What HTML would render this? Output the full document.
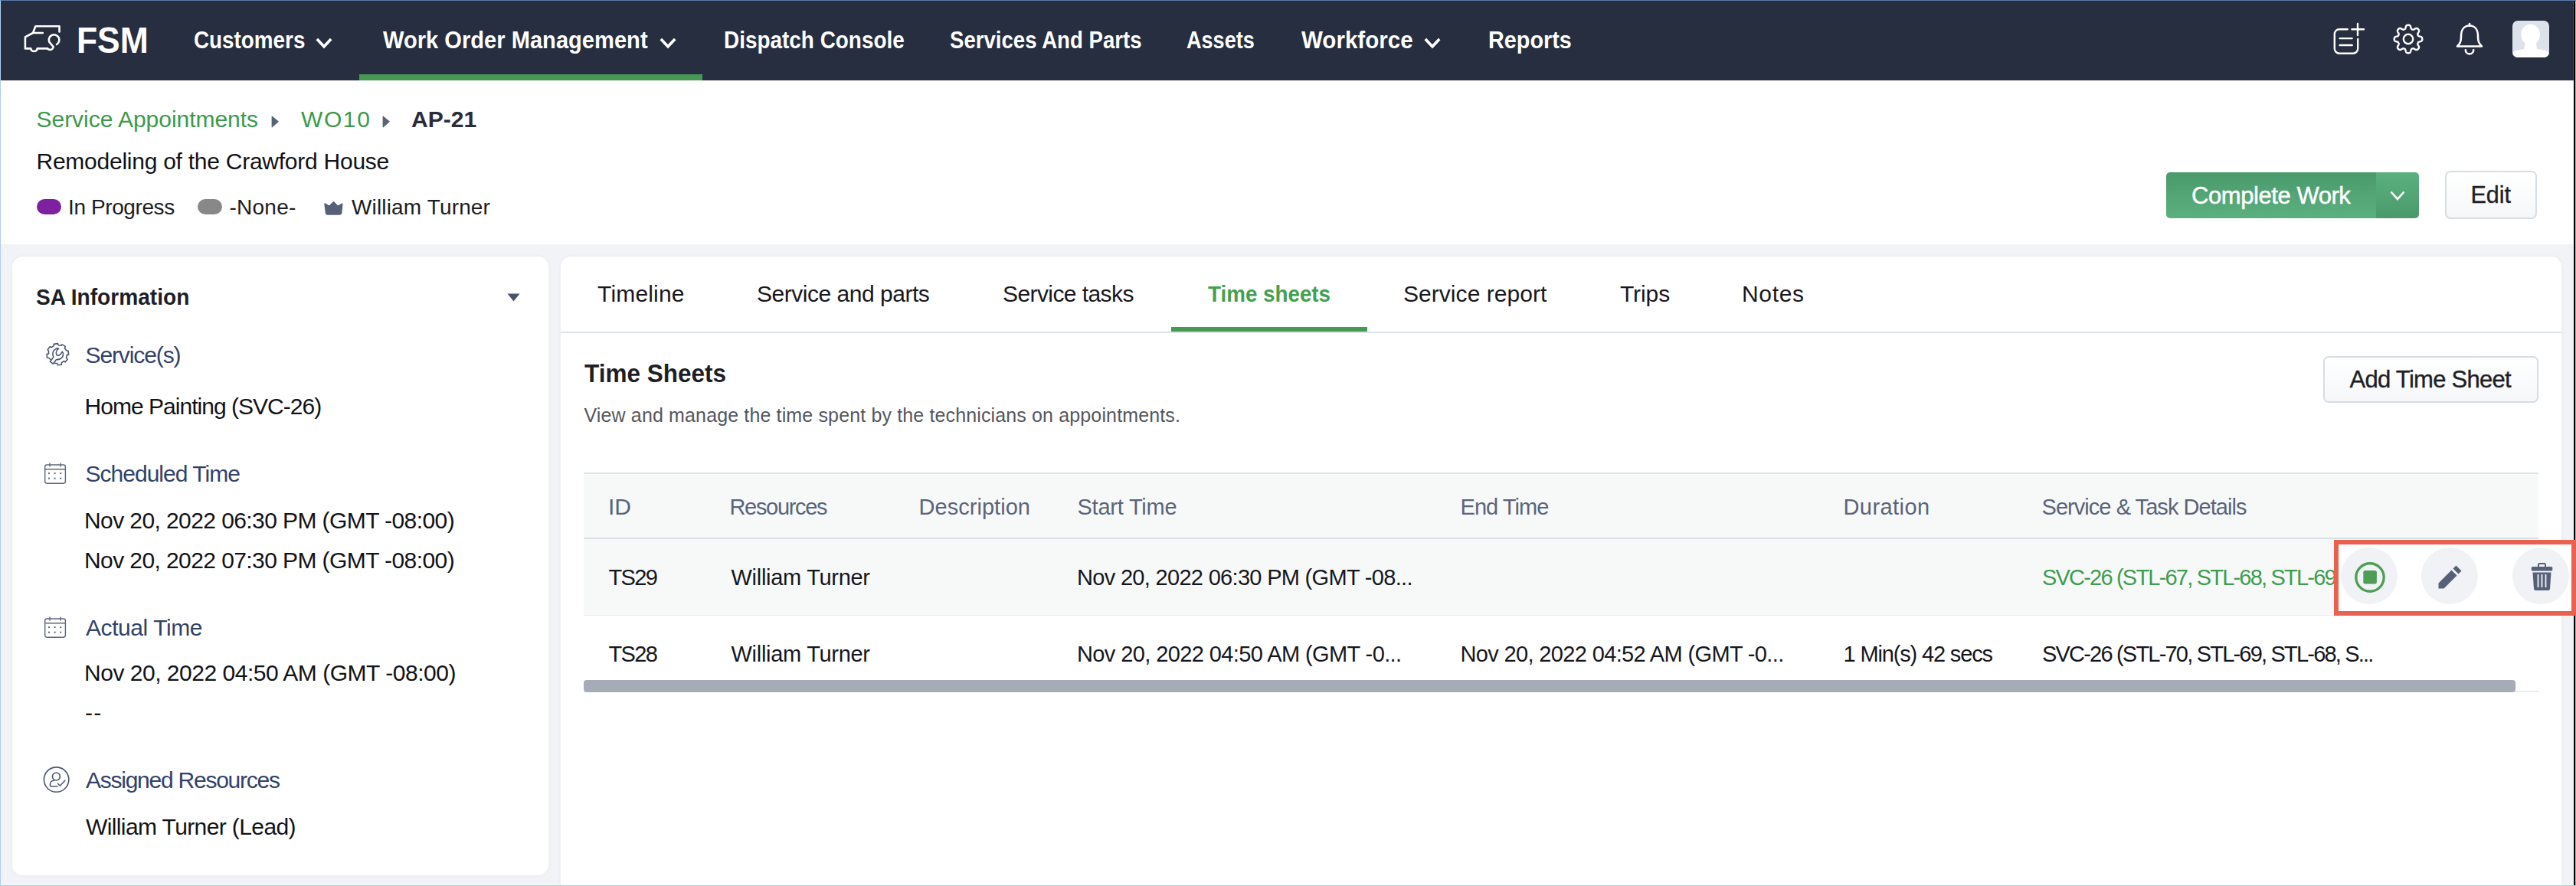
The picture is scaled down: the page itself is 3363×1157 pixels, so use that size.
<!DOCTYPE html>
<html><head><meta charset="utf-8"><title>FSM</title>
<style>
html,body{margin:0;padding:0;}
body{width:3363px;height:1157px;position:relative;overflow:hidden;background:#f2f3f6;font-family:"Liberation Sans",sans-serif;}
.a{position:absolute;}
.t{position:absolute;white-space:nowrap;line-height:1;transform-origin:0 0;}
#frame{position:absolute;left:0;top:0;width:3363px;height:1157px;box-sizing:border-box;border:1px solid #b0cdf5;border-top-color:#5a7aab;border-right-color:#8abdfc;pointer-events:none;z-index:70;}
#nav{left:1px;top:1px;width:3359px;height:104px;background:#262e40;}
#hdr{left:1px;top:105px;width:3359px;height:214px;background:#fff;}
#lp{left:16px;top:335px;width:700px;height:808px;background:#fff;border-radius:14px;box-shadow:0 0 5px rgba(40,50,70,0.05);}
#rp{left:732px;top:335px;width:2612px;height:900px;background:#fff;border-radius:14px;box-shadow:0 0 5px rgba(40,50,70,0.05);}
.btn{position:absolute;box-sizing:border-box;border:2px solid #d6dee4;border-radius:7px;background:linear-gradient(#ffffff,#f5f7f9);}
svg{position:absolute;overflow:visible;}
</style></head>
<body>
<div class="a" id="nav"></div>
<div class="a" style="left:469px;top:97px;width:448px;height:8px;background:#479853;"></div>
<div class="a" id="hdr"></div>
<div class="a" id="lp"></div>
<div class="a" id="rp"></div>
<!-- right black strip -->
<div class="a" style="left:3359px;top:1px;width:1px;height:104px;background:#4a5060;"></div>
<div class="a" style="left:3360px;top:1px;width:2px;height:1155px;background:#000;"></div>
<div class="a" style="left:3359px;top:105px;width:1px;height:1051px;background:#fff;"></div>

<!-- logo -->
<svg style="left:25px;top:25px" width="60" height="50" viewBox="0 0 60 50" fill="none" stroke="#fff" stroke-width="2.6" stroke-linecap="round" stroke-linejoin="round">
<path d="M52.5 16.4V9.3H21.4L18 18H30.8M18 18L7.9 23.4V38.4H15.2A4.3 4.3 0 0 0 23.7 38.4H37"/>
<path d="M49 33A6.8 6.8 0 1 0 39.3 29.8L44.6 36A4.3 4.3 0 0 1 37 38.4"/>
</svg>
<!-- nav chevrons -->
<svg style="left:412px;top:49px" width="22" height="14" viewBox="0 0 22 14" fill="none" stroke="#fff" stroke-width="3.6"><path d="M1.8 2L11 11.8L20.2 2"/></svg>
<svg style="left:861px;top:49px" width="22" height="14" viewBox="0 0 22 14" fill="none" stroke="#fff" stroke-width="3.6"><path d="M1.8 2L11 11.8L20.2 2"/></svg>
<svg style="left:1859px;top:49px" width="22" height="14" viewBox="0 0 22 14" fill="none" stroke="#fff" stroke-width="3.6"><path d="M1.8 2L11 11.8L20.2 2"/></svg>

<!-- nav right icons -->
<svg style="left:3040px;top:25px" width="50" height="50" viewBox="0 0 50 50" fill="none" stroke="#fff" stroke-width="2.4" stroke-linecap="round">
<path d="M24.8 13.2H14A6.2 6.2 0 0 0 7.8 19.4V38.5A6.2 6.2 0 0 0 14 44.7H32A6.2 6.2 0 0 0 38.2 38.5V26"/>
<path d="M14.6 25.1H30.7M14.6 34H30.7M38 5.9V21.1M30.4 13.3H46"/>
</svg>
<svg style="left:3124px;top:31px" width="40" height="40" viewBox="-20 -20 40 40" fill="none" stroke="#fff" stroke-width="2.4" stroke-linejoin="round">
<path d="M18.30 0.00L18.30 0.16L18.29 0.32L18.28 0.48L18.27 0.64L18.25 0.80L18.22 0.95L18.19 1.11L18.15 1.27L18.11 1.43L18.05 1.58L17.99 1.73L17.91 1.88L17.82 2.03L17.71 2.17L17.59 2.32L17.44 2.45L17.27 2.58L17.08 2.71L16.86 2.82L16.62 2.93L16.36 3.03L16.08 3.12L15.78 3.21L15.48 3.29L15.19 3.37L14.90 3.44L14.63 3.51L14.38 3.59L14.15 3.66L13.95 3.74L13.77 3.82L13.61 3.90L13.47 3.99L13.34 4.08L13.23 4.17L13.14 4.27L13.05 4.37L12.97 4.47L12.90 4.57L12.84 4.67L12.77 4.78L12.72 4.88L12.66 4.99L12.61 5.10L12.56 5.20L12.52 5.32L12.48 5.43L12.44 5.54L12.41 5.66L12.38 5.77L12.35 5.89L12.33 6.01L12.32 6.14L12.31 6.27L12.31 6.41L12.32 6.55L12.34 6.70L12.38 6.86L12.43 7.03L12.51 7.22L12.60 7.42L12.70 7.63L12.83 7.86L12.97 8.10L13.12 8.36L13.28 8.62L13.43 8.89L13.58 9.16L13.71 9.42L13.82 9.68L13.92 9.93L13.99 10.16L14.04 10.39L14.07 10.60L14.07 10.80L14.06 10.99L14.04 11.16L14.00 11.33L13.94 11.49L13.88 11.65L13.81 11.80L13.73 11.94L13.65 12.08L13.56 12.21L13.47 12.34L13.37 12.47L13.27 12.59L13.16 12.71L13.05 12.83L12.94 12.94L12.83 13.05L12.71 13.16L12.59 13.27L12.47 13.37L12.34 13.47L12.21 13.56L12.08 13.65L11.94 13.73L11.80 13.81L11.65 13.88L11.49 13.94L11.33 14.00L11.16 14.04L10.99 14.06L10.80 14.07L10.60 14.07L10.39 14.04L10.16 13.99L9.93 13.92L9.68 13.82L9.42 13.71L9.16 13.58L8.89 13.43L8.62 13.28L8.36 13.12L8.10 12.97L7.86 12.83L7.63 12.70L7.42 12.60L7.22 12.51L7.03 12.43L6.86 12.38L6.70 12.34L6.55 12.32L6.41 12.31L6.27 12.31L6.14 12.32L6.01 12.33L5.89 12.35L5.77 12.38L5.66 12.41L5.54 12.44L5.43 12.48L5.32 12.52L5.20 12.56L5.10 12.61L4.99 12.66L4.88 12.72L4.78 12.77L4.67 12.84L4.57 12.90L4.47 12.97L4.37 13.05L4.27 13.14L4.17 13.23L4.08 13.34L3.99 13.47L3.90 13.61L3.82 13.77L3.74 13.95L3.66 14.15L3.59 14.38L3.51 14.63L3.44 14.90L3.37 15.19L3.29 15.48L3.21 15.78L3.12 16.08L3.03 16.36L2.93 16.62L2.82 16.86L2.71 17.08L2.58 17.27L2.45 17.44L2.32 17.59L2.17 17.71L2.03 17.82L1.88 17.91L1.73 17.99L1.58 18.05L1.43 18.11L1.27 18.15L1.11 18.19L0.95 18.22L0.80 18.25L0.64 18.27L0.48 18.28L0.32 18.29L0.16 18.30L0.00 18.30L-0.16 18.30L-0.32 18.29L-0.48 18.28L-0.64 18.27L-0.80 18.25L-0.95 18.22L-1.11 18.19L-1.27 18.15L-1.43 18.11L-1.58 18.05L-1.73 17.99L-1.88 17.91L-2.03 17.82L-2.17 17.71L-2.32 17.59L-2.45 17.44L-2.58 17.27L-2.71 17.08L-2.82 16.86L-2.93 16.62L-3.03 16.36L-3.12 16.08L-3.21 15.78L-3.29 15.48L-3.37 15.19L-3.44 14.90L-3.51 14.63L-3.59 14.38L-3.66 14.15L-3.74 13.95L-3.82 13.77L-3.90 13.61L-3.99 13.47L-4.08 13.34L-4.17 13.23L-4.27 13.14L-4.37 13.05L-4.47 12.97L-4.57 12.90L-4.67 12.84L-4.78 12.77L-4.88 12.72L-4.99 12.66L-5.10 12.61L-5.20 12.56L-5.32 12.52L-5.43 12.48L-5.54 12.44L-5.66 12.41L-5.77 12.38L-5.89 12.35L-6.01 12.33L-6.14 12.32L-6.27 12.31L-6.41 12.31L-6.55 12.32L-6.70 12.34L-6.86 12.38L-7.03 12.43L-7.22 12.51L-7.42 12.60L-7.63 12.70L-7.86 12.83L-8.10 12.97L-8.36 13.12L-8.62 13.28L-8.89 13.43L-9.16 13.58L-9.42 13.71L-9.68 13.82L-9.93 13.92L-10.16 13.99L-10.39 14.04L-10.60 14.07L-10.80 14.07L-10.99 14.06L-11.16 14.04L-11.33 14.00L-11.49 13.94L-11.65 13.88L-11.80 13.81L-11.94 13.73L-12.08 13.65L-12.21 13.56L-12.34 13.47L-12.47 13.37L-12.59 13.27L-12.71 13.16L-12.83 13.05L-12.94 12.94L-13.05 12.83L-13.16 12.71L-13.27 12.59L-13.37 12.47L-13.47 12.34L-13.56 12.21L-13.65 12.08L-13.73 11.94L-13.81 11.80L-13.88 11.65L-13.94 11.49L-14.00 11.33L-14.04 11.16L-14.06 10.99L-14.07 10.80L-14.07 10.60L-14.04 10.39L-13.99 10.16L-13.92 9.93L-13.82 9.68L-13.71 9.42L-13.58 9.16L-13.43 8.89L-13.28 8.62L-13.12 8.36L-12.97 8.10L-12.83 7.86L-12.70 7.63L-12.60 7.42L-12.51 7.22L-12.43 7.03L-12.38 6.86L-12.34 6.70L-12.32 6.55L-12.31 6.41L-12.31 6.27L-12.32 6.14L-12.33 6.01L-12.35 5.89L-12.38 5.77L-12.41 5.66L-12.44 5.54L-12.48 5.43L-12.52 5.32L-12.56 5.20L-12.61 5.10L-12.66 4.99L-12.72 4.88L-12.77 4.78L-12.84 4.67L-12.90 4.57L-12.97 4.47L-13.05 4.37L-13.14 4.27L-13.23 4.17L-13.34 4.08L-13.47 3.99L-13.61 3.90L-13.77 3.82L-13.95 3.74L-14.15 3.66L-14.38 3.59L-14.63 3.51L-14.90 3.44L-15.19 3.37L-15.48 3.29L-15.78 3.21L-16.08 3.12L-16.36 3.03L-16.62 2.93L-16.86 2.82L-17.08 2.71L-17.27 2.58L-17.44 2.45L-17.59 2.32L-17.71 2.17L-17.82 2.03L-17.91 1.88L-17.99 1.73L-18.05 1.58L-18.11 1.43L-18.15 1.27L-18.19 1.11L-18.22 0.95L-18.25 0.80L-18.27 0.64L-18.28 0.48L-18.29 0.32L-18.30 0.16L-18.30 0.00L-18.30 -0.16L-18.29 -0.32L-18.28 -0.48L-18.27 -0.64L-18.25 -0.80L-18.22 -0.95L-18.19 -1.11L-18.15 -1.27L-18.11 -1.43L-18.05 -1.58L-17.99 -1.73L-17.91 -1.88L-17.82 -2.03L-17.71 -2.17L-17.59 -2.32L-17.44 -2.45L-17.27 -2.58L-17.08 -2.71L-16.86 -2.82L-16.62 -2.93L-16.36 -3.03L-16.08 -3.12L-15.78 -3.21L-15.48 -3.29L-15.19 -3.37L-14.90 -3.44L-14.63 -3.51L-14.38 -3.59L-14.15 -3.66L-13.95 -3.74L-13.77 -3.82L-13.61 -3.90L-13.47 -3.99L-13.34 -4.08L-13.23 -4.17L-13.14 -4.27L-13.05 -4.37L-12.97 -4.47L-12.90 -4.57L-12.84 -4.67L-12.77 -4.78L-12.72 -4.88L-12.66 -4.99L-12.61 -5.10L-12.56 -5.20L-12.52 -5.32L-12.48 -5.43L-12.44 -5.54L-12.41 -5.66L-12.38 -5.77L-12.35 -5.89L-12.33 -6.01L-12.32 -6.14L-12.31 -6.27L-12.31 -6.41L-12.32 -6.55L-12.34 -6.70L-12.38 -6.86L-12.43 -7.03L-12.51 -7.22L-12.60 -7.42L-12.70 -7.63L-12.83 -7.86L-12.97 -8.10L-13.12 -8.36L-13.28 -8.62L-13.43 -8.89L-13.58 -9.16L-13.71 -9.42L-13.82 -9.68L-13.92 -9.93L-13.99 -10.16L-14.04 -10.39L-14.07 -10.60L-14.07 -10.80L-14.06 -10.99L-14.04 -11.16L-14.00 -11.33L-13.94 -11.49L-13.88 -11.65L-13.81 -11.80L-13.73 -11.94L-13.65 -12.08L-13.56 -12.21L-13.47 -12.34L-13.37 -12.47L-13.27 -12.59L-13.16 -12.71L-13.05 -12.83L-12.94 -12.94L-12.83 -13.05L-12.71 -13.16L-12.59 -13.27L-12.47 -13.37L-12.34 -13.47L-12.21 -13.56L-12.08 -13.65L-11.94 -13.73L-11.80 -13.81L-11.65 -13.88L-11.49 -13.94L-11.33 -14.00L-11.16 -14.04L-10.99 -14.06L-10.80 -14.07L-10.60 -14.07L-10.39 -14.04L-10.16 -13.99L-9.93 -13.92L-9.68 -13.82L-9.42 -13.71L-9.16 -13.58L-8.89 -13.43L-8.62 -13.28L-8.36 -13.12L-8.10 -12.97L-7.86 -12.83L-7.63 -12.70L-7.42 -12.60L-7.22 -12.51L-7.03 -12.43L-6.86 -12.38L-6.70 -12.34L-6.55 -12.32L-6.41 -12.31L-6.27 -12.31L-6.14 -12.32L-6.01 -12.33L-5.89 -12.35L-5.77 -12.38L-5.66 -12.41L-5.54 -12.44L-5.43 -12.48L-5.32 -12.52L-5.20 -12.56L-5.10 -12.61L-4.99 -12.66L-4.88 -12.72L-4.78 -12.77L-4.67 -12.84L-4.57 -12.90L-4.47 -12.97L-4.37 -13.05L-4.27 -13.14L-4.17 -13.23L-4.08 -13.34L-3.99 -13.47L-3.90 -13.61L-3.82 -13.77L-3.74 -13.95L-3.66 -14.15L-3.59 -14.38L-3.51 -14.63L-3.44 -14.90L-3.37 -15.19L-3.29 -15.48L-3.21 -15.78L-3.12 -16.08L-3.03 -16.36L-2.93 -16.62L-2.82 -16.86L-2.71 -17.08L-2.58 -17.27L-2.45 -17.44L-2.32 -17.59L-2.17 -17.71L-2.03 -17.82L-1.88 -17.91L-1.73 -17.99L-1.58 -18.05L-1.43 -18.11L-1.27 -18.15L-1.11 -18.19L-0.95 -18.22L-0.80 -18.25L-0.64 -18.27L-0.48 -18.28L-0.32 -18.29L-0.16 -18.30L-0.00 -18.30L0.16 -18.30L0.32 -18.29L0.48 -18.28L0.64 -18.27L0.80 -18.25L0.95 -18.22L1.11 -18.19L1.27 -18.15L1.43 -18.11L1.58 -18.05L1.73 -17.99L1.88 -17.91L2.03 -17.82L2.17 -17.71L2.32 -17.59L2.45 -17.44L2.58 -17.27L2.71 -17.08L2.82 -16.86L2.93 -16.62L3.03 -16.36L3.12 -16.08L3.21 -15.78L3.29 -15.48L3.37 -15.19L3.44 -14.90L3.51 -14.63L3.59 -14.38L3.66 -14.15L3.74 -13.95L3.82 -13.77L3.90 -13.61L3.99 -13.47L4.08 -13.34L4.17 -13.23L4.27 -13.14L4.37 -13.05L4.47 -12.97L4.57 -12.90L4.67 -12.84L4.78 -12.77L4.88 -12.72L4.99 -12.66L5.10 -12.61L5.20 -12.56L5.32 -12.52L5.43 -12.48L5.54 -12.44L5.66 -12.41L5.77 -12.38L5.89 -12.35L6.01 -12.33L6.14 -12.32L6.27 -12.31L6.41 -12.31L6.55 -12.32L6.70 -12.34L6.86 -12.38L7.03 -12.43L7.22 -12.51L7.42 -12.60L7.63 -12.70L7.86 -12.83L8.10 -12.97L8.36 -13.12L8.62 -13.28L8.89 -13.43L9.16 -13.58L9.42 -13.71L9.68 -13.82L9.93 -13.92L10.16 -13.99L10.39 -14.04L10.60 -14.07L10.80 -14.07L10.99 -14.06L11.16 -14.04L11.33 -14.00L11.49 -13.94L11.65 -13.88L11.80 -13.81L11.94 -13.73L12.08 -13.65L12.21 -13.56L12.34 -13.47L12.47 -13.37L12.59 -13.27L12.71 -13.16L12.83 -13.05L12.94 -12.94L13.05 -12.83L13.16 -12.71L13.27 -12.59L13.37 -12.47L13.47 -12.34L13.56 -12.21L13.65 -12.08L13.73 -11.94L13.81 -11.80L13.88 -11.65L13.94 -11.49L14.00 -11.33L14.04 -11.16L14.06 -10.99L14.07 -10.80L14.07 -10.60L14.04 -10.39L13.99 -10.16L13.92 -9.93L13.82 -9.68L13.71 -9.42L13.58 -9.16L13.43 -8.89L13.28 -8.62L13.12 -8.36L12.97 -8.10L12.83 -7.86L12.70 -7.63L12.60 -7.42L12.51 -7.22L12.43 -7.03L12.38 -6.86L12.34 -6.70L12.32 -6.55L12.31 -6.41L12.31 -6.27L12.32 -6.14L12.33 -6.01L12.35 -5.89L12.38 -5.77L12.41 -5.66L12.44 -5.54L12.48 -5.43L12.52 -5.32L12.56 -5.20L12.61 -5.10L12.66 -4.99L12.72 -4.88L12.77 -4.78L12.84 -4.67L12.90 -4.57L12.97 -4.47L13.05 -4.37L13.14 -4.27L13.23 -4.17L13.34 -4.08L13.47 -3.99L13.61 -3.90L13.77 -3.82L13.95 -3.74L14.15 -3.66L14.38 -3.59L14.63 -3.51L14.90 -3.44L15.19 -3.37L15.48 -3.29L15.78 -3.21L16.08 -3.12L16.36 -3.03L16.62 -2.93L16.86 -2.82L17.08 -2.71L17.27 -2.58L17.44 -2.45L17.59 -2.32L17.71 -2.17L17.82 -2.03L17.91 -1.88L17.99 -1.73L18.05 -1.58L18.11 -1.43L18.15 -1.27L18.19 -1.11L18.22 -0.95L18.25 -0.80L18.27 -0.64L18.28 -0.48L18.29 -0.32L18.30 -0.16Z"/>
<circle cx="0" cy="0" r="6.2"/>
</svg>
<svg style="left:3195px;top:20px" width="60" height="60" viewBox="0 0 60 60" fill="none" stroke="#fff" stroke-width="2.6" stroke-linejoin="round" stroke-linecap="round">
<path d="M29 13.5C21 13.5 18 20 18 27C18 33 17.5 36 13 40.5H45C40.5 36 40 33 40 27C40 20 37 13.5 29 13.5Z"/>
<path d="M29 11V13.5"/>
<path d="M23.8 45.2A5.2 5.2 0 0 0 34.2 45.2"/>
</svg>
<div class="a" style="left:3280px;top:27px;width:48px;height:48px;border-radius:7px;background:#dde1ea;overflow:hidden;">
<svg style="left:0;top:0" width="48" height="48" viewBox="0 0 48 48"><ellipse cx="23.6" cy="18.3" rx="12.3" ry="13.8" fill="#fff"/><path d="M16.5 29H31L32 36.8C40 37.8 46.5 39.5 48 42.5V48H0V42.5C1.5 39.5 8 37.8 15.5 36.8Z" fill="#fff"/></svg>
</div>

<!-- breadcrumb arrows -->
<svg style="left:354px;top:151px" width="10" height="16" viewBox="0 0 10 16"><path d="M1 0.8L9.6 7.8L1 15.2Z" fill="#5a6276" stroke="#5a6276" stroke-width="0.8" stroke-linejoin="round"/></svg>
<svg style="left:499px;top:151px" width="10" height="16" viewBox="0 0 10 16"><path d="M1 0.8L9.6 7.8L1 15.2Z" fill="#5a6276" stroke="#5a6276" stroke-width="0.8" stroke-linejoin="round"/></svg>
<!-- pills -->
<div class="a" style="left:47.7px;top:260px;width:32.3px;height:20px;border-radius:10px;background:#7d21a1;"></div>
<div class="a" style="left:258px;top:260px;width:32px;height:20px;border-radius:10px;background:#888;"></div>
<!-- crown -->
<svg style="left:415px;top:251px" width="45" height="40" viewBox="0 0 45 40"><path d="M9 14.9L14.9 18.3L20.5 12.9L25.9 18.3L31.8 15.1L30.6 27.3Q30.4 29 28.6 29H12.6Q10.8 29 10.6 27.3Z" fill="#566079" stroke="#566079" stroke-width="1.5" stroke-linejoin="round"/></svg>

<!-- Complete work button -->
<div class="a" style="left:2828px;top:225px;width:330px;height:60px;border-radius:5px;overflow:hidden;">
<div class="a" style="left:0;top:0;width:274px;height:60px;background:linear-gradient(#4a9a6b,#5bb07f);"></div>
<div class="a" style="left:274px;top:0;width:56px;height:60px;background:linear-gradient(#5bb07f,#4a9a6b);"></div>
</div>
<svg style="left:3120px;top:249px" width="20" height="14" viewBox="0 0 20 14" fill="none" stroke="#fff" stroke-width="2.6"><path d="M1.5 1.5L10 11L18.5 1.5"/></svg>
<div class="btn" style="left:3192px;top:223px;width:120px;height:63px;"></div>

<!-- left panel -->
<svg style="left:662px;top:383px" width="17" height="11" viewBox="0 0 17 11"><path d="M0.5 0.5H16.5L8.5 10.5Z" fill="#4b5466"/></svg>
<svg style="left:50px;top:440px" width="50" height="45" viewBox="0 0 50 45" fill="none" stroke="#4a5670" stroke-width="1.6" stroke-linejoin="round" stroke-linecap="round">
<path d="M21.6 34.3L24.9 34.8L25.9 36.8L30.5 36.3L30.2 33.8L33.5 31.5L35.1 32.8L38.1 29.2L36.6 27.4L37.3 23.6L39.6 23.1L39.1 18.3L36.8 17.8L34.5 14.9L35.3 12.4L31 9.9L30 11.3L26.2 10.7L25.4 8.6L20.3 9.4L20.2 11.6L17.1 13.7L15.2 12.6L12.2 16.8L13.5 18.5L13.5 22L11.2 22.4L11.4 27L14.2 27.7L16 29.5"/>
<path d="M15.5 32.3L19.8 26.4C17.8 22 19 17 23 15.4C24.5 14.8 26 14.8 26.6 15.3C23.6 17.2 22.6 20.5 23.8 23C25.2 25.3 28.6 24.5 31.4 19.2C33.4 21.6 33 26.5 29 28.5C27 29.5 24.8 29.5 23.4 29.8L19.3 35.1L15.5 32.3Z"/>
</svg>
<svg style="left:50px;top:595px" width="45" height="45" viewBox="0 0 45 45" fill="none" stroke="#5d667d" stroke-width="1.4">
<rect x="8.7" y="12" width="26.7" height="24.2" rx="2.6"/><path d="M8.7 17.8H35.4M15 9.6V14.5M29 9.6V14.5"/>
<g fill="#5d667d" stroke="none"><rect x="13" y="22.1" width="2" height="2"/><rect x="20.6" y="22.1" width="2" height="2"/><rect x="28.2" y="22.1" width="2" height="2"/><rect x="13" y="28.7" width="2" height="2"/><rect x="20.6" y="28.7" width="2" height="2"/><rect x="28.2" y="28.7" width="2" height="2"/></g>
</svg>
<svg style="left:50px;top:795.5px" width="45" height="45" viewBox="0 0 45 45" fill="none" stroke="#5d667d" stroke-width="1.4">
<rect x="8.7" y="12" width="26.7" height="24.2" rx="2.6"/><path d="M8.7 17.8H35.4M15 9.6V14.5M29 9.6V14.5"/>
<g fill="#5d667d" stroke="none"><rect x="13" y="22.1" width="2" height="2"/><rect x="20.6" y="22.1" width="2" height="2"/><rect x="28.2" y="22.1" width="2" height="2"/><rect x="13" y="28.7" width="2" height="2"/><rect x="20.6" y="28.7" width="2" height="2"/><rect x="28.2" y="28.7" width="2" height="2"/></g>
</svg>
<svg style="left:50px;top:995px" width="45" height="45" viewBox="0 0 45 45" fill="none" stroke="#4a5670" stroke-width="1.6" stroke-linecap="round">
<circle cx="23.6" cy="23.1" r="16.2"/><circle cx="23.4" cy="19" r="5"/>
<path d="M20.5 24.5H19.5C17 24.5 15.5 27 15.5 29.5V31C15.5 31.6 16 32 16.8 32H25M25.5 28.3L28.3 31.2L34.8 24.3"/>
</svg>

<!-- tabs -->
<div class="a" style="left:732px;top:433px;width:2612px;height:2px;background:#dbe2e8;"></div>
<div class="a" style="left:1529px;top:427px;width:256px;height:6px;background:#479853;"></div>
<div class="btn" style="left:3033px;top:465px;width:281px;height:61px;"></div>

<!-- table -->
<div class="a" style="left:762px;top:617px;width:2552px;height:2px;background:#dde4e8;"></div>
<div class="a" style="left:762px;top:619px;width:2552px;height:83px;background:#f7f9f9;"></div>
<div class="a" style="left:762px;top:702px;width:2552px;height:2px;background:#d9e1e6;"></div>
<div class="a" style="left:762px;top:704px;width:2552px;height:99px;background:#f7f9f9;"></div>
<div class="a" style="left:762px;top:803px;width:2552px;height:1px;background:#e8ecee;"></div>
<div class="a" style="left:762px;top:902px;width:2552px;height:1.5px;background:#e8ecef;"></div>
<div class="a" style="left:762px;top:888px;width:2522px;height:16px;border-radius:4px;background:#a6abb8;"></div>

<div class="t" id="fsm" style="left:99.50px;top:28.12px;font-size:49px;font-weight:700;color:#ffffff;transform:scaleX(0.9062);">FSM</div>
<div class="t" id="n1" style="left:253.00px;top:36.76px;font-size:31px;font-weight:700;color:#ffffff;transform:scaleX(0.8979);">Customers</div>
<div class="t" id="n2" style="left:500.00px;top:36.76px;font-size:31px;font-weight:700;color:#ffffff;transform:scaleX(0.9389);">Work Order Management</div>
<div class="t" id="n3" style="left:945.00px;top:36.76px;font-size:31px;font-weight:700;color:#ffffff;transform:scaleX(0.9005);">Dispatch Console</div>
<div class="t" id="n4" style="left:1240.00px;top:36.76px;font-size:31px;font-weight:700;color:#ffffff;transform:scaleX(0.8901);">Services And Parts</div>
<div class="t" id="n5" style="left:1549.00px;top:36.76px;font-size:31px;font-weight:700;color:#ffffff;transform:scaleX(0.8729);">Assets</div>
<div class="t" id="n6" style="left:1699.00px;top:36.76px;font-size:31px;font-weight:700;color:#ffffff;transform:scaleX(0.9535);">Workforce</div>
<div class="t" id="n7" style="left:1943.00px;top:36.76px;font-size:31px;font-weight:700;color:#ffffff;transform:scaleX(0.9286);">Reports</div>
<div class="t" id="bc1" style="left:47.50px;top:141.30px;font-size:30px;font-weight:400;color:#3b9a4b;letter-spacing:-0.032px;">Service Appointments</div>
<div class="t" id="bc2" style="left:393.00px;top:141.30px;font-size:30px;font-weight:400;color:#3b9a4b;letter-spacing:1.600px;">WO10</div>
<div class="t" id="bc3" style="left:537.00px;top:141.30px;font-size:30px;font-weight:700;color:#2a2c38;transform:scaleX(1.0013);">AP-21</div>
<div class="t" id="title" style="left:47.50px;top:195.60px;font-size:30px;font-weight:400;color:#121317;letter-spacing:-0.252px;">Remodeling of the Crawford House</div>
<div class="t" id="st1" style="left:89.00px;top:256.50px;font-size:28px;font-weight:400;color:#1c1d24;letter-spacing:-0.400px;">In Progress</div>
<div class="t" id="st2" style="left:299.50px;top:256.50px;font-size:28px;font-weight:400;color:#1c1d24;letter-spacing:0.240px;">-None-</div>
<div class="t" id="st3" style="left:459.00px;top:256.50px;font-size:28px;font-weight:400;color:#1c1d24;letter-spacing:0.154px;">William Turner</div>
<div class="t" id="cw" style="left:2861.00px;top:239.96px;font-size:31px;font-weight:400;color:#ffffff;letter-spacing:-0.433px;-webkit-text-stroke:0.5px #fff;">Complete Work</div>
<div class="t" id="edit" style="left:3225.50px;top:239.48px;font-size:30.5px;font-weight:400;color:#1e1f25;letter-spacing:-0.067px;-webkit-text-stroke:0.35px #1e1f25;">Edit</div>
<div class="t" id="sai" style="left:47.00px;top:373.21px;font-size:30px;font-weight:700;color:#1e1f26;transform:scaleX(0.9365);">SA Information</div>
<div class="t" id="l1" style="left:111.50px;top:449.21px;font-size:30px;font-weight:400;color:#32426a;letter-spacing:-1.111px;">Service(s)</div>
<div class="t" id="v1" style="left:110.50px;top:516.40px;font-size:30px;font-weight:400;color:#121317;letter-spacing:-0.971px;">Home Painting (SVC-26)</div>
<div class="t" id="l2" style="left:111.50px;top:603.90px;font-size:30px;font-weight:400;color:#32426a;letter-spacing:-0.985px;">Scheduled Time</div>
<div class="t" id="v2" style="left:110.00px;top:665.40px;font-size:30px;font-weight:400;color:#121317;letter-spacing:-0.588px;">Nov 20, 2022 06:30 PM (GMT -08:00)</div>
<div class="t" id="v3" style="left:110.00px;top:716.61px;font-size:30px;font-weight:400;color:#121317;letter-spacing:-0.588px;">Nov 20, 2022 07:30 PM (GMT -08:00)</div>
<div class="t" id="l3" style="left:112.00px;top:805.40px;font-size:30px;font-weight:400;color:#32426a;letter-spacing:-0.420px;">Actual Time</div>
<div class="t" id="v4" style="left:110.00px;top:864.40px;font-size:30px;font-weight:400;color:#121317;letter-spacing:-0.485px;">Nov 20, 2022 04:50 AM (GMT -08:00)</div>
<div class="t" id="v5" style="left:111.00px;top:915.61px;font-size:30px;font-weight:400;color:#121317;letter-spacing:1.200px;">--</div>
<div class="t" id="l4" style="left:112.00px;top:1004.40px;font-size:30px;font-weight:400;color:#32426a;letter-spacing:-1.247px;">Assigned Resources</div>
<div class="t" id="v6" style="left:112.00px;top:1065.11px;font-size:30px;font-weight:400;color:#121317;letter-spacing:-0.610px;">William Turner (Lead)</div>
<div class="t" id="tab1" style="left:780.00px;top:369.11px;font-size:30px;font-weight:400;color:#17181e;letter-spacing:0.171px;">Timeline</div>
<div class="t" id="tab2" style="left:988.00px;top:369.11px;font-size:30px;font-weight:400;color:#17181e;letter-spacing:-0.475px;">Service and parts</div>
<div class="t" id="tab3" style="left:1309.00px;top:369.11px;font-size:30px;font-weight:400;color:#17181e;letter-spacing:-0.583px;">Service tasks</div>
<div class="t" id="tab4" style="left:1576.50px;top:369.11px;font-size:30px;font-weight:700;color:#43a04f;transform:scaleX(0.9258);">Time sheets</div>
<div class="t" id="tab5" style="left:1832.00px;top:369.11px;font-size:30px;font-weight:400;color:#17181e;letter-spacing:0.046px;">Service report</div>
<div class="t" id="tab6" style="left:2115.00px;top:369.11px;font-size:30px;font-weight:400;color:#17181e;letter-spacing:-0.100px;">Trips</div>
<div class="t" id="tab7" style="left:2274.00px;top:369.11px;font-size:30px;font-weight:400;color:#17181e;letter-spacing:0.650px;">Notes</div>
<div class="t" id="ts" style="left:762.50px;top:469.82px;font-size:34px;font-weight:700;color:#1e1f26;transform:scaleX(0.9268);">Time Sheets</div>
<div class="t" id="desc" style="left:762.50px;top:530.24px;font-size:25px;font-weight:400;color:#55565c;letter-spacing:0.138px;">View and manage the time spent by the technicians on appointments.</div>
<div class="t" id="add" style="left:3067.50px;top:480.36px;font-size:31px;font-weight:400;color:#1e1f25;letter-spacing:-0.723px;-webkit-text-stroke:0.35px #1e1f25;">Add Time Sheet</div>
<div class="t" id="h1" style="left:793.50px;top:647.65px;font-size:29px;font-weight:400;color:#5a6479;transform:scaleX(1.0359);">ID</div>
<div class="t" id="h2" style="left:952.50px;top:647.65px;font-size:29px;font-weight:400;color:#5a6479;letter-spacing:-1.325px;">Resources</div>
<div class="t" id="h3" style="left:1199.50px;top:647.65px;font-size:29px;font-weight:400;color:#5a6479;letter-spacing:0.040px;">Description</div>
<div class="t" id="h4" style="left:1406.50px;top:647.65px;font-size:29px;font-weight:400;color:#5a6479;letter-spacing:-0.222px;">Start Time</div>
<div class="t" id="h5" style="left:1906.50px;top:647.65px;font-size:29px;font-weight:400;color:#5a6479;letter-spacing:-0.943px;">End Time</div>
<div class="t" id="h6" style="left:2406.50px;top:647.65px;font-size:29px;font-weight:400;color:#5a6479;letter-spacing:0.429px;">Duration</div>
<div class="t" id="h7" style="left:2665.50px;top:647.65px;font-size:29px;font-weight:400;color:#5a6479;letter-spacing:-0.952px;">Service &amp; Task Details</div>
<div class="t" id="r1a" style="left:794.50px;top:739.75px;font-size:29px;font-weight:400;color:#16171d;letter-spacing:-1.667px;">TS29</div>
<div class="t" id="r1b" style="left:954.50px;top:739.75px;font-size:29px;font-weight:400;color:#16171d;letter-spacing:-0.292px;">William Turner</div>
<div class="t" id="r1c" style="left:1406.00px;top:739.75px;font-size:29px;font-weight:400;color:#16171d;letter-spacing:-0.688px;">Nov 20, 2022 06:30 PM (GMT -08...</div>
<div class="t" id="r1d" style="left:2666.00px;top:739.75px;font-size:29px;font-weight:400;color:#3f9d4f;letter-spacing:-1.800px;">SVC-26 (STL-67, STL-68, STL-69, S...</div>
<div class="t" id="r2a" style="left:794.50px;top:839.85px;font-size:29px;font-weight:400;color:#16171d;letter-spacing:-1.667px;">TS28</div>
<div class="t" id="r2b" style="left:954.50px;top:839.85px;font-size:29px;font-weight:400;color:#16171d;letter-spacing:-0.292px;">William Turner</div>
<div class="t" id="r2c" style="left:1406.00px;top:839.85px;font-size:29px;font-weight:400;color:#16171d;letter-spacing:-0.600px;">Nov 20, 2022 04:50 AM (GMT -0...</div>
<div class="t" id="r2d" style="left:1906.50px;top:839.85px;font-size:29px;font-weight:400;color:#16171d;letter-spacing:-0.645px;">Nov 20, 2022 04:52 AM (GMT -0...</div>
<div class="t" id="r2e" style="left:2406.50px;top:839.85px;font-size:29px;font-weight:400;color:#16171d;letter-spacing:-1.147px;">1 Min(s) 42 secs</div>
<div class="t" id="r2f" style="left:2666.00px;top:839.85px;font-size:29px;font-weight:400;color:#16171d;letter-spacing:-1.800px;">SVC-26 (STL-70, STL-69, STL-68, S...</div>

<!-- red highlight box -->
<div class="a" style="left:3047px;top:705px;width:316px;height:99px;box-sizing:border-box;border:6px solid #eb6150;background:#fff;z-index:80;"></div>
<div class="a" style="left:3056px;top:714.5px;width:74px;height:74px;border-radius:50%;background:#f1f2f5;z-index:81;"></div>
<div class="a" style="left:3160.5px;top:714.5px;width:74px;height:74px;border-radius:50%;background:#f1f2f5;z-index:81;"></div>
<div class="a" style="left:3280.3px;top:714.5px;width:74px;height:74px;border-radius:50%;background:#f1f2f5;z-index:81;"></div>
<svg style="left:3074px;top:733.5px;z-index:82" width="40" height="40" viewBox="0 0 40 40"><circle cx="20" cy="20" r="18.2" fill="none" stroke="#4f9d57" stroke-width="3.4"/><rect x="11.3" y="11" width="17.6" height="17.6" rx="2.5" fill="#4f9d57"/></svg>
<svg style="left:3183px;top:738px;z-index:82" width="32" height="32" viewBox="0 0 32 32"><path d="M0.5 23.5L17.5 6.5L24.5 13.5L7.5 30.5H0.5Z M19.5 4.5L23.5 0.5L30.5 7.5L26.5 11.5Z" fill="#576079"/></svg>
<svg style="left:3304px;top:735px;z-index:82" width="30" height="37" viewBox="0 0 30 37"><path d="M10 5V2.5Q10 1 11.5 1H17.5Q19 1 19 2.5V5" fill="none" stroke="#576079" stroke-width="2"/><rect x="0.8" y="5" width="27.5" height="5.5" rx="1.5" fill="#576079"/><path d="M2.5 12.5H26.5L25 34Q24.8 36 22.8 36H6.2Q4.2 36 4 34Z" fill="#576079"/><path d="M9.5 15V32M14.5 15V32M19.5 15V32" stroke="#f1f2f5" stroke-width="1.8"/></svg>

<div id="frame"></div>
</body></html>
